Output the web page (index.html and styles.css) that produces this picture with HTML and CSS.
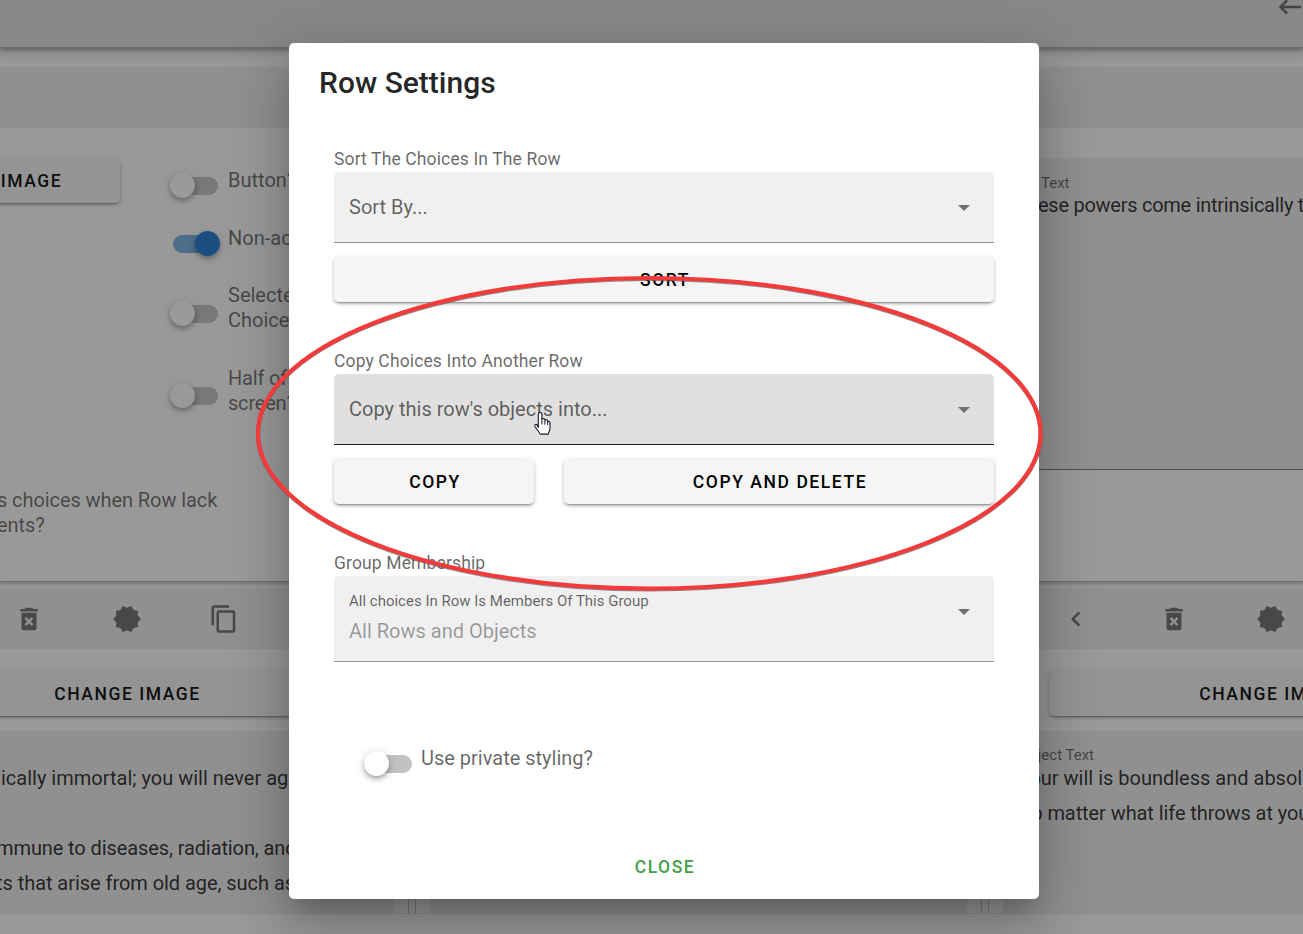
FILE: index.html
```
<!DOCTYPE html>
<html lang="en">
<head>
<meta charset="utf-8">
<title>Row Settings</title>
<link rel="stylesheet" href="styles.css">
</head>
<body>
<svg class="defs" width="0" height="0">
  <symbol id="trash" viewBox="0 0 24 24"><path d="M6,19A2,2 0 0,0 8,21H16A2,2 0 0,0 18,19V7H6V19M8.46,11.88L9.87,10.47L12,12.59L14.12,10.47L15.53,11.88L13.41,14L15.53,16.12L14.12,17.53L12,15.41L9.88,17.53L8.47,16.12L10.59,14L8.46,11.88M15.5,4L14.5,3H9.5L8.5,4H5V6H19V4H15.5Z"/></symbol>
  <symbol id="decagram" viewBox="0 0 24 24"><path d="M23,12L20.56,9.22L20.9,5.54L17.29,4.72L15.4,1.54L12,3L8.6,1.54L6.71,4.72L3.1,5.53L3.44,9.21L1,12L3.44,14.78L3.1,18.47L6.71,19.29L8.6,22.47L12,21L15.4,22.46L17.29,19.28L20.9,18.46L20.56,14.78L23,12Z"/></symbol>
  <symbol id="copy" viewBox="0 0 24 24"><path d="M19,21H8V7H19M19,5H8A2,2 0 0,0 6,7V21A2,2 0 0,0 8,23H19A2,2 0 0,0 21,21V7A2,2 0 0,0 19,5M16,1H4A2,2 0 0,0 2,3V17H4V3H16V1Z"/></symbol>
  <symbol id="left" viewBox="0 0 24 24"><path d="M15.41,16.58L10.83,12L15.41,7.41L14,6L8,12L14,18L15.41,16.58Z"/></symbol>
  <symbol id="back" viewBox="0 0 24 24"><path d="M21,11H6.83L10.41,7.41L9,6L3,12L9,18L10.41,16.58L6.83,13H21V11Z"/></symbol>
</svg>

<div class="page">
  <header class="topbar"><svg class="icon"><use href="#back"/></svg></header>
  <div class="band"></div>
  <section class="editor">
    <div class="btn editor-btn">CHANGE IMAGE</div>
    <div class="options">
      <div class="option o1"><span class="switch"></span><span>Button?</span></div>
      <div class="option o2"><span class="switch on"></span><span>Non-active?</span></div>
      <div class="option o3"><span class="switch"></span><span>Selected<br>Choices?</span></div>
      <div class="option o4"><span class="switch"></span><span>Half of<br>screen?</span></div>
      <div class="note">s choices when Row lack<br>ents?</div>
    </div>
    <div class="area row-area">
      <div class="small">Text</div>
      <div class="row-text">ese powers come intrinsically to</div>
    </div>
  </section>
  <section class="cards">
    <article class="card first">
      <div class="tools"><svg class="icon"><use href="#trash"/></svg><svg class="icon"><use href="#decagram"/></svg><svg class="icon"><use href="#copy"/></svg></div>
      <div class="btn card-btn">CHANGE IMAGE</div>
      <div class="area"><div class="small">&nbsp;</div><div>ically immortal; you will never age</div><div>&nbsp;</div><div class="pull-m">mmune to diseases, radiation, and</div><div class="pull-t">ts that arise from old age, such as</div></div>
    </article>
    <article class="card mid">
      <div class="tools"></div>
      <div class="btn card-btn"></div>
      <div class="area"></div>
    </article>
    <article class="card last">
      <div class="tools"><svg class="icon"><use href="#left"/></svg><svg class="icon"><use href="#trash"/></svg><svg class="icon"><use href="#decagram"/></svg></div>
      <div class="btn card-btn">CHANGE IMAGE</div>
      <div class="area"><div class="small">Object Text</div><div>Your will is boundless and absolute</div><div>No matter what life throws at you</div></div>
    </article>
  </section>
</div>

<div class="overlay">
  <div class="dialog">
    <h1>Row Settings</h1>
    <section class="group">
      <div class="caption">Sort The Choices In The Row</div>
      <div class="select"><span>Sort By...</span><i class="caret"></i></div>
      <div class="buttons"><div class="btn wide">SORT</div></div>
    </section>
    <section class="group">
      <div class="caption">Copy Choices Into Another Row</div>
      <div class="select hover"><span>Copy this row's objects into...</span><i class="caret"></i></div>
      <div class="buttons"><div class="btn narrow">COPY</div><div class="btn wide">COPY AND DELETE</div></div>
    </section>
    <section class="group">
      <div class="caption">Group Membership</div>
      <div class="select tall"><div><div class="small">All choices In Row Is Members Of This Group</div><div class="placeholder">All Rows and Objects</div></div><i class="caret"></i></div>
    </section>
    <div class="option private"><span class="switch"></span><span>Use private styling?</span></div>
    <div class="close">CLOSE</div>
  </div>
</div>

<svg class="marks" width="1303" height="934" viewBox="0 0 1303 934">
  <g transform="translate(0 -1)" stroke="#15152a">
    <path d="M538.3 428.500V415.300c0-2.600 3.600-2.600 3.600 0v5.200c.4-1.500 2.800-1.400 3 .2v.8c.6-1.300 2.700-1 2.800.5v1c.7-1 2.300-.6 2.300.8v5.300c0 2.500-1.200 3.500-1.700 6h-8.200c-.9-2.500-3.500-4.700-5.100-7.500-.8-1.700.8-2.900 2.100-1.700z" fill="#fff" stroke-width="1.100" stroke-linejoin="round"/>
    <path d="M541.900 420.500v5M544.900 421.700v4M547.700 423v3" stroke-width="1"/>
  </g>
  <ellipse cx="649.300" cy="434.200" rx="391.300" ry="155.300" fill="none" stroke="#555" stroke-opacity=".65" stroke-width="4.200"/>
  <ellipse cx="649.300" cy="433.300" rx="391.300" ry="155.300" fill="none" stroke="#f43b3b" stroke-width="4.200"/>
</svg>
</body>
</html>
```
FILE: styles.css
```
* { box-sizing: border-box; }
body { margin: 0; width: 1303px; height: 934px; overflow: hidden; background: #fff; font: 400 20px/35px Roboto, sans-serif; color: rgba(0,0,0,.87); }
.defs { position: absolute; }
.page { width: 1303px; height: 934px; overflow: hidden; white-space: nowrap; }
.icon { width: 30px; height: 30px; flex: none; display: block; fill: #6a6a6a; }
.topbar { position: relative; height: 47px; margin-bottom: 20px; background: #e0e0e0; display: flex; justify-content: flex-end; box-shadow: 0 2px 5px 1px rgba(0,0,0,.38), 0 5px 12px 6px rgba(0,0,0,.08); }
.topbar .icon { margin: -8px -2px 0 0; fill: #606060; }
.band { position: relative; height: 61px; background: #efefef; }
.editor { height: 454px; display: flex; padding-top: 30px; border-bottom: 1px solid #aaa; box-shadow: 0 2px 3px 1px rgba(0,0,0,.2); }
.btn { height: 45px; padding: 2px 0 0 2px; display: flex; align-items: center; justify-content: center; border-radius: 5px; background: #f5f5f5; color: #000; font-size: 17.5px; font-weight: 500; letter-spacing: 1.56px; box-shadow: 0 4px 1px -3px rgba(0,0,0,.2), 0 2px 3px rgba(0,0,0,.22), 0 1px 6px rgba(0,0,0,.12); }
.editor-btn { width: 264px; margin-left: -144px; flex: none; }
.options { width: 308px; flex: none; color: rgba(0,0,0,.6); line-height: 25px; }
.option { display: flex; gap: 10px; padding-left: 53px; line-height: 25px; color: rgba(0,0,0,.6); }
.o1 { height: 58px; padding-top: 10px; }
.o2 { height: 57px; padding-top: 10px; }
.o3 { height: 83px; padding-top: 10px; }
.o4 { height: 122px; padding-top: 10px; letter-spacing: -.2px; }
.note { margin-left: -123px; padding-top: 10px; letter-spacing: -.08px; }
.switch { position: relative; width: 45px; height: 18px; margin-top: 9px; border-radius: 9px; background: #c2c2c2; flex: none; }
.o3 .switch { margin-top: 22px; }
.o4 .switch { margin-top: 21px; }
.switch::after { content: ""; position: absolute; left: -3px; top: -4px; width: 25px; height: 25px; border-radius: 50%; background: #fff; box-shadow: 0 3px 5px rgba(0,0,0,.3), 0 1px 12px rgba(0,0,0,.12); }
.switch.on { background: #75afe3; }
.switch.on::after { left: 22px; background: #1976d2; }
.area { background: #efefef; }
.small { font-size: 15px; line-height: 20px; color: rgba(0,0,0,.6); }
.row-area { width: 875px; height: 312px; border-bottom: 1px solid #777; padding: 15px 0 0 610px; flex: none; }
.row-area .small { padding-left: 3px; }
.row-area .row-text { margin-top: -5px; letter-spacing: -.26px; }
.cards { display: flex; gap: 6px; margin-top: 6px; height: 326px; border-bottom: 1px solid #e3e3e3; }
.card { display: flex; flex-direction: column; flex: none; box-shadow: inset 1px 0 #c4c4c4, inset -1px 0 #c4c4c4; }
.first { width: 409px; box-shadow: inset -1px 0 #c4c4c4; }
.mid, .last { width: 567px; }
.tools { height: 61px; background: #efefef; display: flex; align-items: center; }
.tools .icon { margin: 0 33.750px; }
.first .tools .icon:first-child { margin-left: 14px; }
.last .tools { padding-left: 39.500px; }
.card-btn { margin: 22px 61px 15px; flex: none; }
.first .card-btn { margin-left: -97px; padding-left: 4px; }
.card .area { margin: 0 15px; padding: 14px 15px 0; flex: 1; }
.card .area .small { margin-bottom: -4px; }
.last .area .small { padding-left: 1px; }
.last .area div:last-child { margin-left: -1px; letter-spacing: -.08px; }
.first .area { margin-left: 0; padding-left: 1px; }
.pull-m { margin-left: -5px; letter-spacing: -.1px; }
.pull-t { margin-left: -5px; letter-spacing: -.05px; }
.overlay { position: absolute; inset: 0; background: rgba(33,33,33,.46); display: flex; justify-content: center; padding: 43px 0 0 25px; }
.dialog { width: 750px; height: 856px; background: #fff; border-radius: 5px; box-shadow: 0 14px 19px -9px rgba(0,0,0,.2), 0 30px 48px 4px rgba(0,0,0,.14), 0 11px 58px 10px rgba(0,0,0,.12); }
h1 { margin: 0; padding: 20px 30px 0; height: 101px; font-size: 30px; font-weight: 500; line-height: 40px; }
.group { height: 202px; padding: 5px 45px 0; }
.caption { font-size: 17.500px; height: 23px; line-height: 20px; letter-spacing: .13px; color: rgba(0,0,0,.6); }
.select { height: 71px; padding: 0 22px 0 15px; display: flex; align-items: center; justify-content: space-between; background: #f0f0f0; border-bottom: 1px solid #949494; border-radius: 5px 5px 0 0; color: rgba(0,0,0,.6); }
.hover { background: #e0e0e0; border-color: #202020; }
.caret { border: 6px solid transparent; border-top-color: #707070; border-bottom: 0; margin-top: 1px; margin-right: 2px; }
.buttons { display: flex; gap: 30px; padding-top: 14px; }
.narrow { width: 200px; }
.wide { flex: 1; }
.tall { height: 86px; align-items: flex-start; padding-top: 15px; }
.tall .caret { margin-top: 18px; }
.placeholder { color: rgba(0,0,0,.38); line-height: 40px; }
.private { gap: 9px; margin-top: -4px; padding: 0 0 0 78px; height: 104px; }
.close { padding-left: 2px; text-align: center; color: #43a047; font-size: 17.500px; font-weight: 500; letter-spacing: 1.560px; }
.marks { position: absolute; left: 0; top: 0; }
```
